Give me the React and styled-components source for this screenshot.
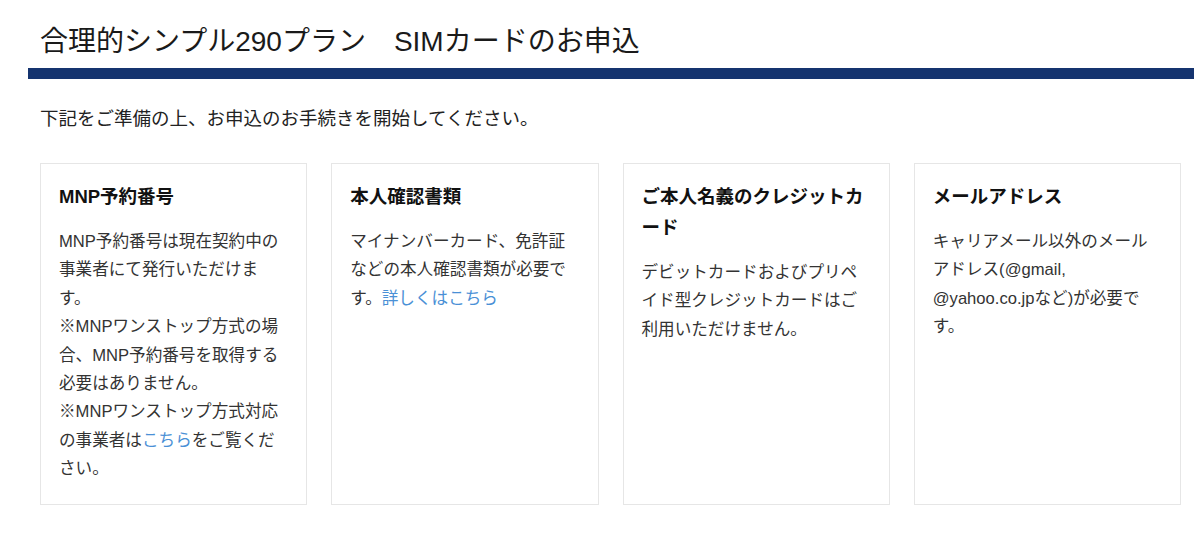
import React from "react";
import styled, { createGlobalStyle } from "styled-components";

const GlobalStyle = createGlobalStyle`
  html, body {
    margin: 0;
    padding: 0;
    background: #fff;
  }
  body {
    font-family: "Liberation Sans", Arial, "Noto Sans CJK JP", sans-serif;
    color: #333;
  }
`;

const Page = styled.div`
  width: 1200px;
  box-sizing: border-box;
  padding: 22px 6px 30px 28px;
`;

const Title = styled.h1`
  margin: 0 0 6px;
  padding-left: 12px;
  font-size: 28px;
  line-height: 40px;
  font-weight: 400;
  color: #1a1a1a;
  white-space: nowrap;
`;

const Bar = styled.div`
  height: 11px;
  background: #15346f;
`;

const Content = styled.div`
  padding: 0 13px 0 12px;
`;

const Lead = styled.p`
  margin: 25px 0 29px;
  font-size: 18.5px;
  line-height: 30px;
  color: #222;
`;

const Cards = styled.div`
  display: grid;
  grid-template-columns: repeat(4, 1fr);
  column-gap: 24px;
`;

const Card = styled.div`
  border: 1px solid #e6e6e6;
  padding: 17px 18px 20px;
  min-height: 341px;
  box-sizing: border-box;
`;

const CardTitle = styled.h3`
  margin: 0 0 16px;
  font-size: 18.5px;
  line-height: 31px;
  font-weight: 700;
  color: #111;
`;

const CardBody = styled.p`
  margin: 0;
  font-size: 16.6px;
  line-height: 28.4px;
  color: #333;
  line-break: strict;
`;

const Link = styled.a`
  color: #4a90d6;
  text-decoration: none;
`;

const items = [
  {
    title: "MNP予約番号",
    body: (
      <>
        MNP予約番号は現在契約中の事業者にて発行いただけます。
        <br />
        ※MNPワンストップ方式の場合、MNP予約番号を取得する必要はありません。
        <br />
        ※MNPワンストップ方式対応の事業者は<Link href="#">こちら</Link>
        をご覧ください。
      </>
    ),
  },
  {
    title: "本人確認書類",
    body: (
      <>
        マイナンバーカード、免許証などの本人確認書類が必要です。
        <Link href="#">詳しくはこちら</Link>
      </>
    ),
  },
  {
    title: "ご本人名義のクレジットカード",
    body: <>デビットカードおよびプリペイド型クレジットカードはご利用いただけません。</>,
  },
  {
    title: "メールアドレス",
    body: <>キャリアメール以外のメールアドレス(@gmail, @yahoo.co.jpなど)が必要です。</>,
  },
];

export default function App() {
  return (
    <Page>
      <GlobalStyle />
      <Title>合理的シンプル290プラン　SIMカードのお申込</Title>
      <Bar />
      <Content>
        <Lead>下記をご準備の上、お申込のお手続きを開始してください。</Lead>
        <Cards>
          {items.map((item) => (
            <Card key={item.title}>
              <CardTitle>{item.title}</CardTitle>
              <CardBody>{item.body}</CardBody>
            </Card>
          ))}
        </Cards>
      </Content>
    </Page>
  );
}
